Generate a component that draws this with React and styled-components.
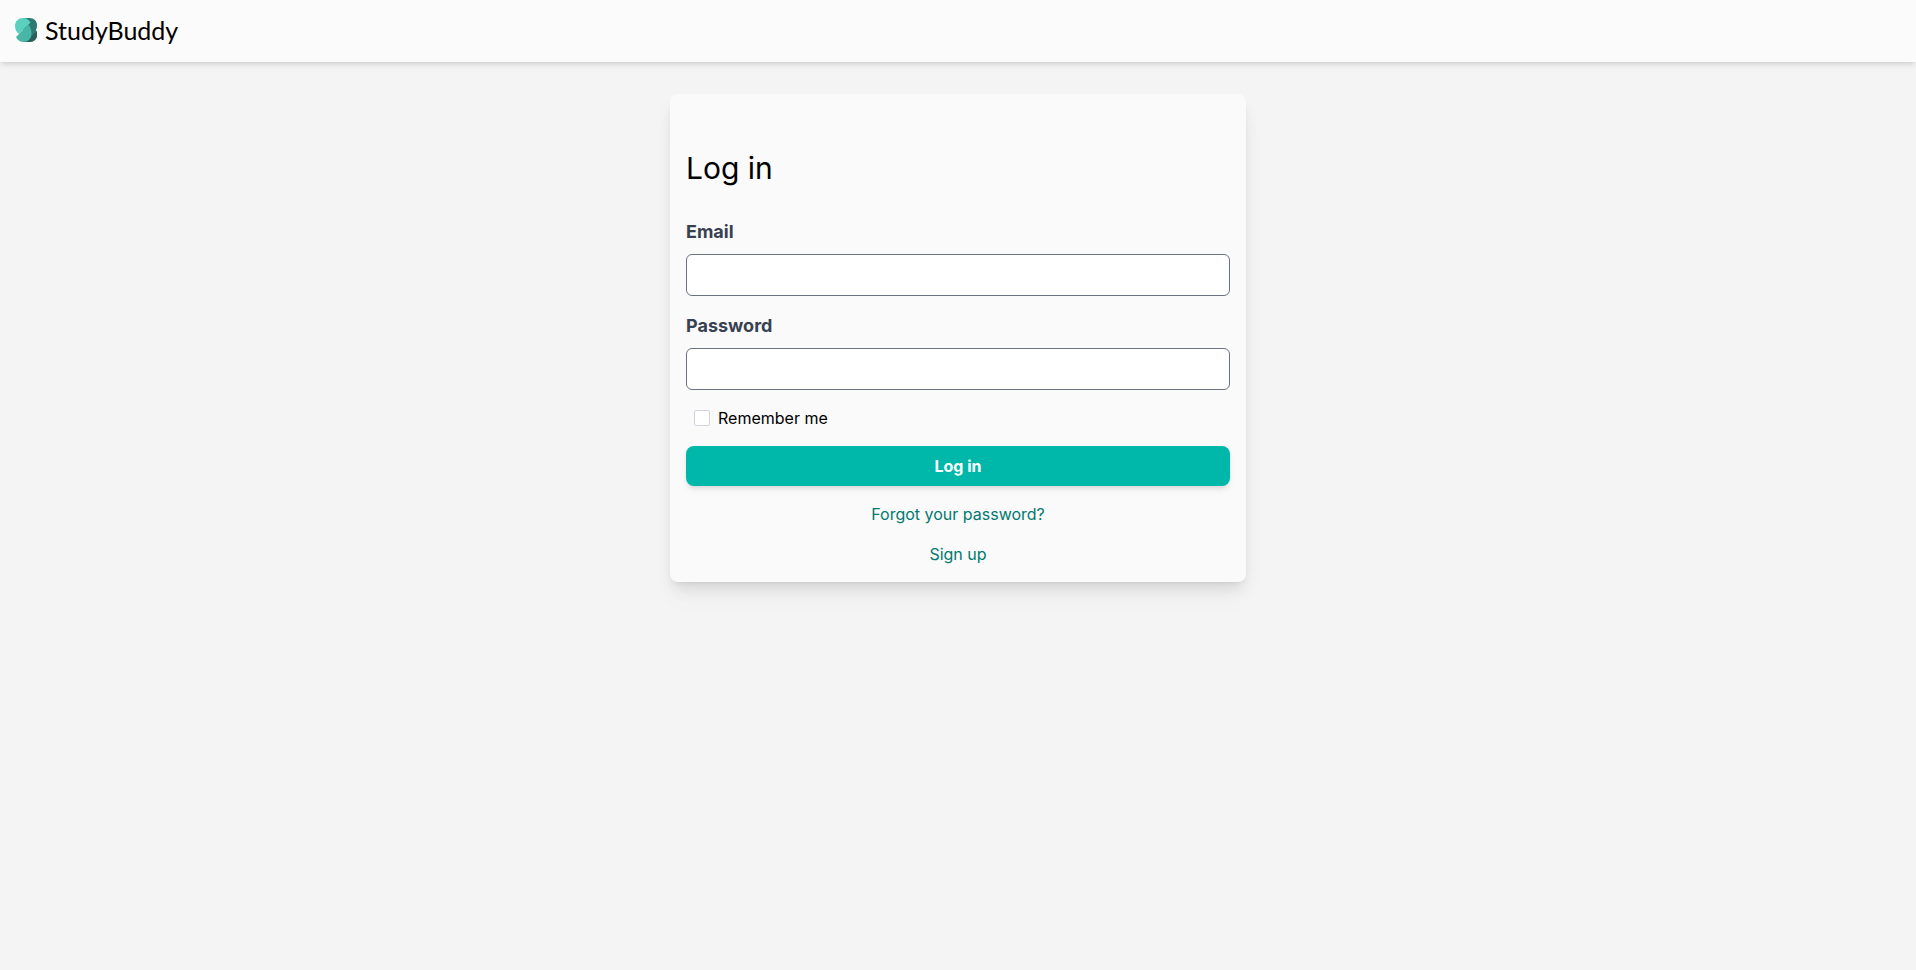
import React, { useState } from "react";
import styled, { createGlobalStyle } from "styled-components";

export default function App() {
  return (
    <>
      <GlobalStyle />
      <Header>
        <Brand href="/">
          <Logo />
          <span>StudyBuddy</span>
        </Brand>
      </Header>
      <Main>
        <LoginForm />
      </Main>
    </>
  );
}

function LoginForm() {
  const [email, setEmail] = useState("");
  const [password, setPassword] = useState("");
  const [remember, setRemember] = useState(false);

  const submit = (e) => {
    e.preventDefault();
  };

  return (
    <Card onSubmit={submit}>
      <Title>Log in</Title>
      <Field>
        <label htmlFor="email">Email</label>
        <input
          id="email"
          type="email"
          value={email}
          onChange={(e) => setEmail(e.target.value)}
        />
      </Field>
      <Field>
        <label htmlFor="password">Password</label>
        <input
          id="password"
          type="password"
          value={password}
          onChange={(e) => setPassword(e.target.value)}
        />
      </Field>
      <Remember>
        <input
          id="remember"
          type="checkbox"
          checked={remember}
          onChange={(e) => setRemember(e.target.checked)}
        />
        <label htmlFor="remember">Remember me</label>
      </Remember>
      <Submit type="submit">Log in</Submit>
      <TextLink href="/password/new">Forgot your password?</TextLink>
      <TextLink href="/sign_up">Sign up</TextLink>
    </Card>
  );
}

function Logo() {
  return (
    <svg width="22" height="24" viewBox="0 0 22 24" aria-hidden="true">
      <path d="M8 0H14.500C19 0 22 3 22 7C22 9 21.800 10.500 21 12C21.800 13.500 22 15 22 17C22 21 19 24 14.500 24H8Z" fill="#2c7a72" />
      <path d="M22 13V17C22 21 19 24 14.500 24H10L16 19Z" fill="#285e5b" />
      <path d="M8 0C11.500 0 14 2 15.500 4.500L4 16C1.500 14.500 0 11.500 0 8C0 3 3.500 0 8 0Z" fill="#5ad1bf" />
      <path d="M15.500 4.500L13.500 6.500C15.500 9 16.500 12 16.500 15.500C16.500 20.500 13 24 8.500 24C5.500 24 2.500 22.500 1 19L13 7Z" fill="#48b5a6" />
    </svg>
  );
}

const GlobalStyle = createGlobalStyle`
  * {
    box-sizing: border-box;
  }
  body {
    margin: 0;
    background: #f4f4f4;
    color: #000;
    font-family: Inter, "Liberation Sans", sans-serif;
    font-size: 16px;
    line-height: 24px;
  }
  input,
  button {
    font: inherit;
  }
`;

const Header = styled.header`
  display: flex;
  align-items: center;
  padding: 14px 15px 16px;
  background: #fbfbfb;
  box-shadow: 0 4px 6px -1px rgba(0, 0, 0, 0.1), 0 2px 4px -2px rgba(0, 0, 0, 0.1);
`;

const Brand = styled.a`
  display: flex;
  align-items: center;
  gap: 8px;
  color: #000;
  font-family: Lato, sans-serif;
  font-size: 25px;
  line-height: 32px;
  text-decoration: none;
`;

const Main = styled.main`
  display: flex;
  justify-content: center;
  padding: 32px 16px;
`;

const Card = styled.form`
  display: flex;
  flex-direction: column;
  gap: 16px;
  width: 100%;
  max-width: 576px;
  padding: 16px;
  border-radius: 8px;
  background: #fafafa;
  box-shadow: 0 10px 15px -3px rgba(0, 0, 0, 0.1), 0 4px 6px -4px rgba(0, 0, 0, 0.1),
    0 20px 30px rgba(0, 0, 0, 0.02);
`;

const Title = styled.h1`
  margin: 40px 0 16px;
  font-size: 30px;
  font-weight: 400;
  line-height: 36px;
`;

const Field = styled.div`
  display: flex;
  flex-direction: column;
  gap: 8px;
  & label {
    color: #374151;
    font-size: 18px;
    font-weight: 700;
    line-height: 28px;
  }
  & input {
    width: 100%;
    height: 42px;
    padding: 8px 12px;
    border: 1px solid #6b7280;
    border-radius: 6px;
    background: #fff;
  }
  & input:focus {
    outline: 2px solid #00b8a9;
  }
`;

const Remember = styled.div`
  display: flex;
  align-items: center;
  gap: 8px;
  padding: 0 8px;
  & input {
    appearance: none;
    width: 16px;
    height: 16px;
    margin: 0;
    border: 1px solid #d1d5db;
    border-radius: 2px;
    background: #fff;
  }
  & input:checked {
    background: #00b8a9;
  }
`;

const Submit = styled.button`
  height: 40px;
  border: 0;
  border-radius: 8px;
  background: #00b8a9;
  color: #fff;
  font-weight: 700;
  cursor: pointer;
  box-shadow: 0 4px 6px -1px rgba(0, 0, 0, 0.1), 0 2px 4px -2px rgba(0, 0, 0, 0.1);
`;

const TextLink = styled.a`
  align-self: center;
  color: #00796f;
  text-decoration: none;
`;
